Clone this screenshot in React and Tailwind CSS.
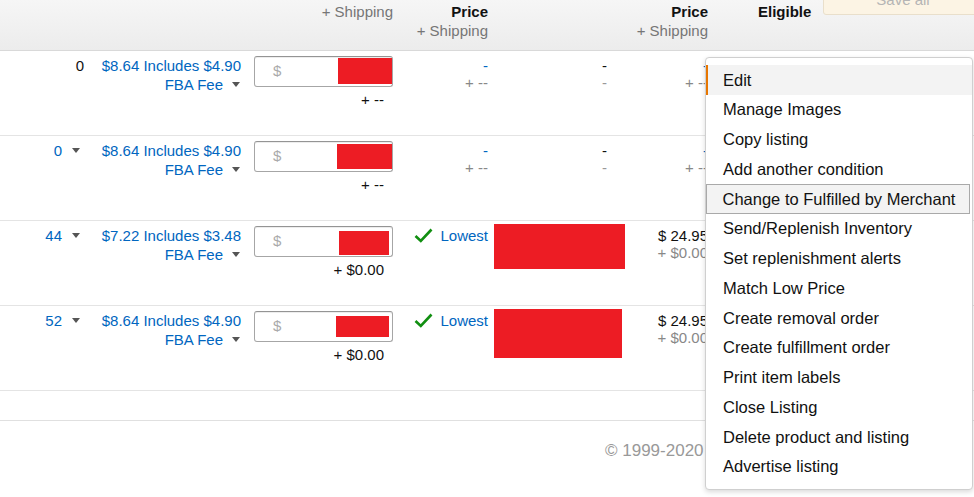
import React from "react";

const Caret = () => (
  <svg width="8" height="5" viewBox="0 0 8 5" className="shrink-0">
    <polygon points="0,0 8,0 4,5" fill="#555" />
  </svg>
);

const Check = () => (
  <svg width="19" height="15" viewBox="0 0 19 15" className="shrink-0">
    <path d="M1.5 8 L6.8 13 L17.5 1.5" fill="none" stroke="#118f11" strokeWidth="2.6" />
  </svg>
);

const rows = [
  { qty: "0", qtyMenu: false, price: "$8.64 Includes $4.90", red: "w-[54px] h-[26px] mt-[1px] mr-0", ship: "+ --", buy: false },
  { qty: "0", qtyMenu: true, price: "$8.64 Includes $4.90", red: "w-[55px] h-[25px] mt-[2px] mr-0", ship: "+ --", buy: false },
  { qty: "44", qtyMenu: true, price: "$7.22 Includes $3.48", red: "w-[50px] h-[24px] mt-[4px] mr-[3px]", ship: "+ $0.00", buy: true, redE: "w-[131px] h-[45px]" },
  { qty: "52", qtyMenu: true, price: "$8.64 Includes $4.90", red: "w-[53px] h-[21px] mt-[4px] mr-[3px]", ship: "+ $0.00", buy: true, redE: "w-[128px] h-[49px]" },
];

const menuItems = [
  "Edit",
  "Manage Images",
  "Copy listing",
  "Add another condition",
  "Change to Fulfilled by Merchant",
  "Send/Replenish Inventory",
  "Set replenishment alerts",
  "Match Low Price",
  "Create removal order",
  "Create fulfillment order",
  "Print item labels",
  "Close Listing",
  "Delete product and listing",
  "Advertise listing",
];

function Row({ r }) {
  return (
    <div className="flex h-[85px] border-b border-[#e4e4e4]">
      {/* qty */}
      <div className="w-[88px] shrink-0 pt-[5px] leading-[19px]">
        {r.qtyMenu ? (
          <div className="flex items-center justify-end gap-[10px] pr-[8px] text-[#0066c0]">
            <span>{r.qty}</span>
            <Caret />
          </div>
        ) : (
          <div className="text-right pr-[4px] text-[#111]">{r.qty}</div>
        )}
      </div>
      {/* price */}
      <div className="w-[166px] shrink-0 pt-[5px] pr-[13px] leading-[19px] text-[#0066c0] flex flex-col items-end">
        <span className="whitespace-nowrap">{r.price}</span>
        <div className="flex items-center gap-[9px] pr-[1px]">
          <span>FBA Fee</span>
          <Caret />
        </div>
      </div>
      {/* input */}
      <div className="w-[139px] shrink-0 pt-[5px]">
        <div className="h-[31px] w-[139px] border border-[#a6a6a6] border-t-[#949494] rounded-[3px] bg-white shadow-[inset_0_1px_0_rgba(0,0,0,0.07)] flex items-start">
          <span className="pl-[18px] pt-[4px] leading-[19px] text-[#aaa]">$</span>
          <div className={"ml-auto bg-[#ed1c24] " + r.red} />
        </div>
        <div className="mt-[3px] pr-[9px] text-right leading-[19px] text-[#111]">{r.ship}</div>
      </div>
      {/* lowest price */}
      <div className="w-[97px] shrink-0">
        {r.buy ? (
          <div className="flex items-center justify-end gap-[7px] pr-[2px] pt-[5px] leading-[19px]">
            <Check />
            <span className="text-[#0066c0]">Lowest</span>
          </div>
        ) : (
          <div className="pt-[6px] pr-[2px] text-right leading-[17px]">
            <div className="text-[#0066c0]">-</div>
            <div className="text-[#888]">+ --</div>
          </div>
        )}
      </div>
      {/* column E */}
      <div className="w-[146px] shrink-0">
        {r.buy ? (
          <div className="pl-[4px] pt-[3px]">
            <div className={"bg-[#ed1c24] " + r.redE} />
          </div>
        ) : (
          <div className="pt-[6px] pr-[29px] text-right leading-[17px]">
            <div className="text-[#111]">-</div>
            <div className="text-[#999]">-</div>
          </div>
        )}
      </div>
      {/* column F */}
      <div className="w-[84px] shrink-0 pt-[6px] pr-[12px] text-right leading-[17px] whitespace-nowrap">
        {r.buy ? (
          <>
            <div className="text-[#111]">$ 24.95</div>
            <div className="text-[#888]">+ $0.00</div>
          </>
        ) : (
          <>
            <div className="text-[#0066c0]">-</div>
            <div className="text-[#888]">+ --</div>
          </>
        )}
      </div>
      <div className="flex-1" />
    </div>
  );
}

export default function App() {
  return (
    <div className="relative w-[974px] h-[497px] overflow-hidden bg-white text-[15px] font-['Liberation_Sans',Arial,sans-serif]">
      {/* header */}
      <div className="flex h-[51px] border-b border-[#d9d9d9] bg-gradient-to-b from-[#f6f6f6] to-[#ececec] leading-[19px]">
        <div className="w-[88px] shrink-0" />
        <div className="w-[166px] shrink-0" />
        <div className="w-[139px] shrink-0 pt-[2px] text-right text-[#767676]">+ Shipping</div>
        <div className="w-[97px] shrink-0 pt-[2px] pr-[2px] text-right">
          <div className="font-bold text-[#111]">Price</div>
          <div className="text-[#767676]">+ Shipping</div>
        </div>
        <div className="w-[146px] shrink-0" />
        <div className="w-[84px] shrink-0 pt-[2px] pr-[12px] text-right">
          <div className="font-bold text-[#111]">Price</div>
          <div className="text-[#767676] whitespace-nowrap">+ Shipping</div>
        </div>
        <div className="w-[103px] shrink-0 pt-[2px] pl-[38px] font-bold text-[#111]">Eligible</div>
        <div className="w-[151px] shrink-0">
          <div className="-mt-[17px] h-[32px] w-[160px] rounded-[3px] border border-[#e9dfcb] bg-[#fcf4e4] flex items-center justify-center text-[#b5b5b5]">
            Save all
          </div>
        </div>
      </div>

      {rows.map((r, i) => (
        <Row key={i} r={r} />
      ))}

      <div className="h-[30px] border-b border-[#e0e0e0]" />
      <div className="pt-[20px] pl-[605px] leading-[19px] text-[17px] text-[#999] whitespace-nowrap">© 1999-2020</div>

      {/* dropdown menu */}
      <div className="absolute left-[705px] top-[57px] w-[268px] h-[433px] rounded-[4px] border border-[#cfcfcf] bg-white shadow-[0_2px_5px_rgba(0,0,0,0.15)] pt-[7px] text-[16.5px] text-[#111]">
        {menuItems.map((m, i) => {
          if (i === 0)
            return (
              <div key={m} className="h-[29.77px] flex items-center border-l-2 border-[#e77600] bg-[#f3f3f3] pl-[15px]">
                {m}
              </div>
            );
          if (i === 4)
            return (
              <div key={m} className="h-[29.77px] mr-[2px] flex items-center border-[1.5px] border-[#a9a9a9] bg-[#f3f3f3] pl-[15.5px] whitespace-nowrap">
                {m}
              </div>
            );
          return (
            <div key={m} className="h-[29.77px] flex items-center pl-[17px] whitespace-nowrap">
              {m}
            </div>
          );
        })}
      </div>
    </div>
  );
}
